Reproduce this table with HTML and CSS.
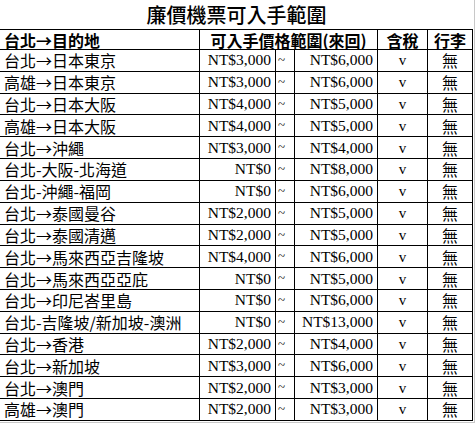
FILE: index.html
```html
<!DOCTYPE html>
<html lang="zh-Hant">
<head>
<meta charset="utf-8">
<link rel="stylesheet" href="styles.css">
</head>
<body>
<div class="sheet">
  <div class="title">廉價機票可入手範圍</div>
  <div class="row head">
    <div class="cell c1">台北→目的地</div>
    <div class="cell span3">可入手價格範圍(來回)</div>
    <div class="cell mid">含稅</div>
    <div class="cell mid">行李</div>
  </div>
  <div class="row"><div class="cell c1">台北→日本東京</div><div class="cell num">NT$3,000</div><div class="cell tilde">~</div><div class="cell num">NT$6,000</div><div class="cell mid v">v</div><div class="cell mid">無</div></div>
  <div class="row"><div class="cell c1">高雄→日本東京</div><div class="cell num">NT$3,000</div><div class="cell tilde">~</div><div class="cell num">NT$6,000</div><div class="cell mid v">v</div><div class="cell mid">無</div></div>
  <div class="row"><div class="cell c1">台北→日本大阪</div><div class="cell num">NT$4,000</div><div class="cell tilde">~</div><div class="cell num">NT$5,000</div><div class="cell mid v">v</div><div class="cell mid">無</div></div>
  <div class="row"><div class="cell c1">高雄→日本大阪</div><div class="cell num">NT$4,000</div><div class="cell tilde">~</div><div class="cell num">NT$5,000</div><div class="cell mid v">v</div><div class="cell mid">無</div></div>
  <div class="row"><div class="cell c1">台北→沖繩</div><div class="cell num">NT$3,000</div><div class="cell tilde">~</div><div class="cell num">NT$4,000</div><div class="cell mid v">v</div><div class="cell mid">無</div></div>
  <div class="row"><div class="cell c1">台北-大阪-北海道</div><div class="cell num">NT$0</div><div class="cell tilde">~</div><div class="cell num">NT$8,000</div><div class="cell mid v">v</div><div class="cell mid">無</div></div>
  <div class="row"><div class="cell c1">台北-沖繩-福岡</div><div class="cell num">NT$0</div><div class="cell tilde">~</div><div class="cell num">NT$6,000</div><div class="cell mid v">v</div><div class="cell mid">無</div></div>
  <div class="row"><div class="cell c1">台北→泰國曼谷</div><div class="cell num">NT$2,000</div><div class="cell tilde">~</div><div class="cell num">NT$5,000</div><div class="cell mid v">v</div><div class="cell mid">無</div></div>
  <div class="row"><div class="cell c1">台北→泰國清邁</div><div class="cell num">NT$2,000</div><div class="cell tilde">~</div><div class="cell num">NT$5,000</div><div class="cell mid v">v</div><div class="cell mid">無</div></div>
  <div class="row"><div class="cell c1">台北→馬來西亞吉隆坡</div><div class="cell num">NT$4,000</div><div class="cell tilde">~</div><div class="cell num">NT$6,000</div><div class="cell mid v">v</div><div class="cell mid">無</div></div>
  <div class="row"><div class="cell c1">台北→馬來西亞亞庇</div><div class="cell num">NT$0</div><div class="cell tilde">~</div><div class="cell num">NT$5,000</div><div class="cell mid v">v</div><div class="cell mid">無</div></div>
  <div class="row"><div class="cell c1">台北→印尼峇里島</div><div class="cell num">NT$0</div><div class="cell tilde">~</div><div class="cell num">NT$6,000</div><div class="cell mid v">v</div><div class="cell mid">無</div></div>
  <div class="row"><div class="cell c1">台北-吉隆坡/新加坡-澳洲</div><div class="cell num">NT$0</div><div class="cell tilde">~</div><div class="cell num">NT$13,000</div><div class="cell mid v">v</div><div class="cell mid">無</div></div>
  <div class="row"><div class="cell c1">台北→香港</div><div class="cell num">NT$2,000</div><div class="cell tilde">~</div><div class="cell num">NT$4,000</div><div class="cell mid v">v</div><div class="cell mid">無</div></div>
  <div class="row"><div class="cell c1">台北→新加坡</div><div class="cell num">NT$3,000</div><div class="cell tilde">~</div><div class="cell num">NT$6,000</div><div class="cell mid v">v</div><div class="cell mid">無</div></div>
  <div class="row"><div class="cell c1">台北→澳門</div><div class="cell num">NT$2,000</div><div class="cell tilde">~</div><div class="cell num">NT$3,000</div><div class="cell mid v">v</div><div class="cell mid">無</div></div>
  <div class="row"><div class="cell c1">高雄→澳門</div><div class="cell num">NT$2,000</div><div class="cell tilde">~</div><div class="cell num">NT$3,000</div><div class="cell mid v">v</div><div class="cell mid">無</div></div>
</div>
</body>
</html>
```

FILE: styles.css
```css
html, body {
  margin: 0;
  padding: 0;
  background: #fff;
}

.sheet {
  width: 475px;
  height: 423px;
  box-sizing: border-box;
  border-right: 1px solid #c8c8c8;
  border-bottom: 1px solid #c8c8c8;
  font-family: "Noto Sans CJK TC", "Noto Sans CJK SC", sans-serif;
  color: #000;
  overflow: hidden;
}

.title {
  width: 473px;
  height: 30px;
  box-sizing: border-box;
  border-bottom: 1px solid #000;
  display: flex;
  align-items: center;
  justify-content: center;
  font-size: 20px;
  font-weight: 500;
  line-height: 24px;
  padding-top: 1px;
}

.row {
  width: 473px;
  height: 21.82px;
  box-sizing: border-box;
  border-bottom: 1px solid #000;
  display: grid;
  grid-template-columns: 200px 76px 19px 83px 50px 45px;
}

.row.head {
  height: 20px;
  font-weight: 700;
}

.cell {
  box-sizing: border-box;
  border-right: 1px solid #000;
  display: flex;
  align-items: center;
  font-size: 16px;
  line-height: 18px;
  white-space: nowrap;
}

.head .cell {
  line-height: 16px;
}

.c1 {
  padding-left: 4px;
}

.span3 {
  grid-column: span 3;
  justify-content: center;
}

.mid {
  justify-content: center;
}

.num {
  justify-content: flex-end;
  padding-right: 4px;
  font-family: "Liberation Serif", serif;
  font-size: 15.5px;
}

.tilde {
  font-family: "Liberation Serif", serif;
  font-size: 13px;
  padding-left: 2px;
  align-items: flex-start;
  padding-top: 1px;
}

.v {
  font-family: "Liberation Serif", serif;
  font-size: 15px;
}
```
